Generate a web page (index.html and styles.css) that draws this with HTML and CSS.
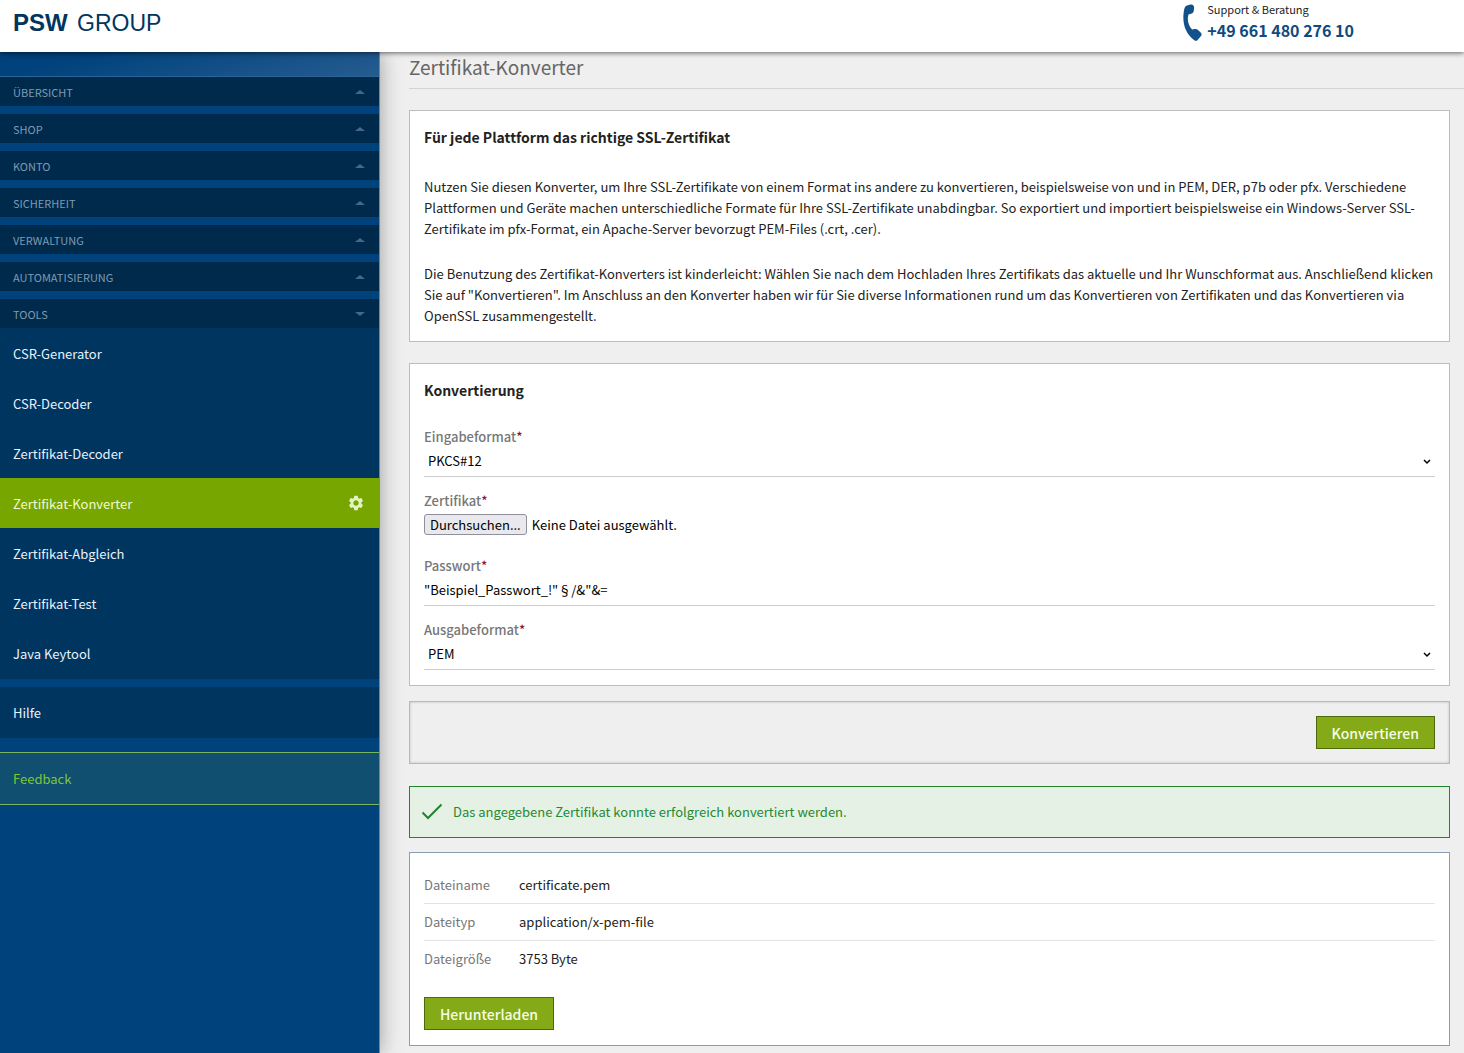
FILE: index.html
```html
<!DOCTYPE html>
<html lang="de">
<head>
    <meta charset="UTF-8">
    <meta name="viewport" content="width=device-width, initial-scale=1.0">
    <title>Zertifikat-Konverter</title>
    <link rel="stylesheet" href="styles.css">
</head>
<body>
    <header class="header">
        <a href="#" class="logo"><b>PSW</b> GROUP</a>
        <div class="support">
            <svg class="phone-icon" viewBox="0 0 19 37" aria-hidden="true">
                <path d="M4 1.500 7.500.6c2-.5 3.400.8 3.600 2.800l-.2 2.600c-.1 1.900-1 3.300-2.800 3.800l-2.600.6c-1.600 5.600-.3 10.900 3.600 15.200l2.400-.6c1.300-.3 2.500 0 3.500 1l2.900 2.800c1 1.200.9 2.600-.3 3.600l-3.200 3.800c-1 .8-2.100.7-3.100 0C2.300 29.500-.8 19.400.7 8.300 1.200 4.700 1.800 2.100 4 1.500z"/>
            </svg>
            <div>
                <div class="support-title">Support &amp; Beratung</div>
                <a href="tel:+4966148027610" class="support-number">+49 661 480 276 10</a>
            </div>
        </div>
    </header>

    <div class="layout">
        <nav class="sidebar">
            <div class="sidebar-top"></div>
            <div class="nav-groups">
                <button type="button" class="nav-group">ÜBERSICHT</button>
                <button type="button" class="nav-group">SHOP</button>
                <button type="button" class="nav-group">KONTO</button>
                <button type="button" class="nav-group">SICHERHEIT</button>
                <button type="button" class="nav-group">VERWALTUNG</button>
                <button type="button" class="nav-group">AUTOMATISIERUNG</button>
                <button type="button" class="nav-group open">TOOLS</button>
            </div>
            <div class="nav-list">
                <a href="#">CSR-Generator</a>
                <a href="#">CSR-Decoder</a>
                <a href="#">Zertifikat-Decoder</a>
                <a href="#" class="active">Zertifikat-Konverter
                    <svg class="gear-icon" viewBox="0 0 24 24" aria-hidden="true">
                        <path d="M19.140 12.940c.04-.3.06-.61.06-.94 0-.32-.02-.64-.07-.94l2.030-1.580c.18-.14.23-.41.12-.61l-1.920-3.320c-.12-.22-.37-.29-.59-.22l-2.390.96c-.5-.38-1.030-.7-1.620-.94l-.36-2.540c-.04-.24-.24-.41-.48-.41h-3.840c-.24 0-.43.17-.47.41l-.36 2.540c-.59.24-1.130.57-1.620.94l-2.390-.96c-.22-.08-.47 0-.59.22L2.740 8.870c-.12.21-.08.47.12.61l2.030 1.580c-.05.3-.09.63-.09.94s.02.64.07.94l-2.030 1.580c-.18.14-.23.41-.12.61l1.920 3.320c.12.22.37.29.59.22l2.390-.96c.5.38 1.030.7 1.620.94l.36 2.540c.05.24.24.41.48.41h3.840c.24 0 .44-.17.47-.41l.36-2.540c.59-.24 1.130-.56 1.620-.94l2.390.96c.22.08.47 0 .59-.22l1.920-3.320c.12-.22.07-.47-.12-.61l-2.010-1.580zM12 15.600c-1.980 0-3.600-1.620-3.600-3.600s1.620-3.600 3.600-3.600 3.600 1.620 3.600 3.600-1.620 3.600-3.600 3.600z"/>
                    </svg>
                </a>
                <a href="#">Zertifikat-Abgleich</a>
                <a href="#">Zertifikat-Test</a>
                <a href="#">Java Keytool</a>
            </div>
            <div class="nav-list">
                <a href="#">Hilfe</a>
            </div>
            <a href="#" class="feedback">Feedback</a>
        </nav>

        <main class="content">
            <h1>Zertifikat-Konverter</h1>

            <section class="card intro">
                <h2>Für jede Plattform das richtige SSL-Zertifikat</h2>
                <p>Nutzen Sie diesen Konverter, um Ihre SSL-Zertifikate von einem Format ins andere zu konvertieren, beispielsweise von und in PEM, DER, p7b oder pfx. Verschiedene Plattformen und Geräte machen unterschiedliche Formate für Ihre SSL-Zertifikate unabdingbar. So exportiert und importiert beispielsweise ein Windows-Server SSL-Zertifikate im pfx-Format, ein Apache-Server bevorzugt PEM-Files (.crt, .cer).</p>
                <p>Die Benutzung des Zertifikat-Konverters ist kinderleicht: Wählen Sie nach dem Hochladen Ihres Zertifikats das aktuelle und Ihr Wunschformat aus. Anschließend klicken Sie auf "Konvertieren". Im Anschluss an den Konverter haben wir für Sie diverse Informationen rund um das Konvertieren von Zertifikaten und das Konvertieren via OpenSSL zusammengestellt.</p>
            </section>

            <form id="converter-form">
                <section class="card">
                    <h2>Konvertierung</h2>
                    <div class="form-group">
                        <label for="input-format">Eingabeformat<span class="required">*</span></label>
                        <select id="input-format" name="input-format">
                            <option>PKCS#12</option>
                            <option>PEM</option>
                            <option>DER</option>
                        </select>
                    </div>
                    <div class="form-group">
                        <label for="certificate">Zertifikat<span class="required">*</span></label>
                        <div class="file-row">
                            <input type="file" id="certificate" name="certificate" class="file-input">
                            <button type="button" id="browse" class="browse">Durchsuchen...</button>
                            <span id="file-name">Keine Datei ausgewählt.</span>
                        </div>
                    </div>
                    <div class="form-group">
                        <label for="password">Passwort<span class="required">*</span></label>
                        <input type="text" id="password" name="password" class="text-input" value="&quot;Beispiel_Passwort_!&quot;§/&amp;&quot;&amp;=">
                    </div>
                    <div class="form-group">
                        <label for="output-format">Ausgabeformat<span class="required">*</span></label>
                        <select id="output-format" name="output-format">
                            <option>PEM</option>
                            <option>DER</option>
                            <option>PKCS#12</option>
                        </select>
                    </div>
                </section>

                <div class="actions">
                    <button type="submit" class="btn">Konvertieren</button>
                </div>
            </form>

            <div class="success-message">
                <svg class="check-icon" viewBox="0 0 22 17" aria-hidden="true">
                    <path d="M1.500 9.500 7 15 20.500 1.500"/>
                </svg>
                Das angegebene Zertifikat konnte erfolgreich konvertiert werden.
            </div>

            <section class="card result">
                <table>
                    <tr><th scope="row">Dateiname</th><td>certificate.pem</td></tr>
                    <tr><th scope="row">Dateityp</th><td>application/x-pem-file</td></tr>
                    <tr><th scope="row">Dateigröße</th><td>3753 Byte</td></tr>
                </table>
                <button type="button" class="btn">Herunterladen</button>
            </section>
        </main>
    </div>

    <script src="script.js"></script>
</body>
</html>
```
FILE: styles.css
```css
* {
    box-sizing: border-box;
}

body {
    margin: 0;
    font-family: "Noto Sans CJK SC", "Open Sans", sans-serif;
    font-size: 13px;
    line-height: 21px;
    color: #222;
    background-color: #efefef;
}

a {
    text-decoration: none;
}

button, input, select {
    font-family: inherit;
    font-size: inherit;
    color: inherit;
}

.header {
    position: relative;
    z-index: 2;
    display: flex;
    justify-content: space-between;
    height: 52px;
    padding: 0 110px 0 13px;
    background-color: #fff;
    box-shadow: 0 1px 5px rgba(0, 0, 0, 0.6);
}

.logo {
    font-family: "Liberation Sans", Arial, sans-serif;
    font-size: 23px;
    line-height: 46px;
    color: #003560;
}

.logo b {
    margin-right: 3px;
    font-size: 24px;
}

.support {
    display: flex;
    gap: 5px;
    line-height: 19px;
}

.phone-icon {
    width: 19px;
    height: 37px;
    margin-top: 4px;
    fill: #12518a;
}

.support-title {
    font-size: 11px;
}

.support-number {
    display: block;
    font-size: 16px;
    line-height: 22px;
    font-weight: bold;
    color: #0f4a80;
}

.layout {
    display: flex;
    min-height: calc(100vh - 52px);
}

/* Sidebar */
.sidebar {
    flex: 0 0 380px;
    background-color: #00427c;
    border-right: 1px solid #6d88a5;
    box-shadow: 0 0 20px rgba(0, 0, 0, 0.35);
}

.sidebar-top {
    height: 24px;
    background: linear-gradient(165deg, #00427c 20%, #265c90);
}

.nav-groups {
    display: flex;
    flex-direction: column;
    gap: 8px;
    border-top: 1px solid #2b6496;
}

.nav-group {
    display: flex;
    align-items: center;
    justify-content: space-between;
    height: 29px;
    padding: 0 14px 0 13px;
    border: none;
    background-color: #002a4b;
    color: #7e9ab2;
    font-size: 11px;
    cursor: pointer;
}

.nav-group::after {
    content: "";
    border: 5px solid transparent;
    border-top: none;
    border-bottom: 4px solid #46698a;
}

.nav-group.open::after {
    border-top: 4px solid #46698a;
    border-bottom: none;
}

.nav-list {
    margin-bottom: 8px;
    padding-bottom: 1px;
    background-color: #003560;
}

.nav-list a {
    display: flex;
    align-items: center;
    justify-content: space-between;
    height: 50px;
    padding: 0 14px 0 13px;
    color: #e6f2fc;
}

.nav-list a.active {
    background-color: #78a600;
    color: #effad6;
}

.gear-icon {
    width: 18px;
    height: 18px;
    fill: #e4f3c4;
}

.feedback {
    display: flex;
    align-items: center;
    height: 53px;
    margin-top: 14px;
    padding: 0 13px;
    border-top: 1px solid #78b55f;
    border-bottom: 1px solid #78b55f;
    background-color: #104f6f;
    color: #7dc638;
}

/* Content */
.content {
    flex: 1;
    min-width: 0;
    padding: 0 14px 8px 29px;
}

h1 {
    margin: 0 -14px 21px 0;
    padding-bottom: 7px;
    border-bottom: 1px solid #d4d4d4;
    color: #666;
    font-size: 19px;
    line-height: 29px;
    font-weight: normal;
}

h2 {
    margin: 0 0 26px;
    font-size: 14px;
    line-height: 22px;
    font-weight: bold;
}

.card {
    padding: 15px 14px;
    border: 1px solid #bdbdbd;
    background-color: #fff;
}

.intro {
    margin-bottom: 21px;
    padding-right: 8px;
}

.intro h2 {
    margin-bottom: 28px;
}

.intro p {
    margin: 0 0 24px;
}

.intro p:last-child {
    margin-bottom: 0;
}

.form-group {
    margin-bottom: 14px;
}

.form-group:last-child {
    margin-bottom: 0;
}

label {
    display: block;
    line-height: 20px;
    font-weight: 500;
    color: #777;
}

.required {
    color: #8a1538;
}

select, .text-input {
    display: block;
    width: 100%;
    height: 30px;
    padding: 0 4px 3px;
    border: none;
    border-bottom: 1px solid #ccc;
    border-radius: 0;
    background-color: transparent;
    color: #000;
}

select {
    appearance: none;
    background: url("data:image/svg+xml,%3Csvg xmlns='http://www.w3.org/2000/svg' viewBox='0 0 8 6'%3E%3Cpath d='M1 1l3 3 3-3' fill='none' stroke='%23000' stroke-width='1.500'/%3E%3C/svg%3E") no-repeat right 4px top 12px / 8px 6px;
}

.text-input {
    padding-left: 0;
}

.file-row {
    display: flex;
    align-items: center;
    gap: 5px;
    height: 31px;
    padding-bottom: 4px;
    color: #000;
}

/* the button beside it opens the file dialog */
.file-input {
    position: absolute;
    width: 1px;
    height: 1px;
    opacity: 0;
}

.browse {
    height: 21px;
    padding: 0 5px;
    border: 1px solid #8f8f9d;
    border-radius: 3px;
    background-color: #e9e9ed;
    line-height: 19px;
}

.actions {
    display: flex;
    justify-content: flex-end;
    margin: 15px 0 22px;
    padding: 14px;
    border: 1px solid #b9b9b9;
    box-shadow: inset 0 0 3px rgba(0, 0, 0, 0.2);
}

.btn {
    height: 33px;
    padding: 0 15px;
    border: 1px solid #4b6a0c;
    background-color: #84aa17;
    color: #f6fde4;
    font-size: 14px;
    font-weight: 500;
    cursor: pointer;
}

.success-message {
    display: flex;
    align-items: center;
    gap: 10px;
    height: 52px;
    margin-bottom: 14px;
    padding: 0 11px 1px;
    border: 1px solid #23832f;
    background-color: #e5f1e5;
    color: #268a30;
}

.check-icon {
    width: 22px;
    height: 17px;
    fill: none;
    stroke: #23832f;
    stroke-width: 2;
}

.result {
    padding-top: 13px;
    border-color: #8b9db3;
}

table {
    width: 100%;
    margin-bottom: 20px;
    border-collapse: collapse;
}

th, td {
    height: 37px;
    padding: 0;
    text-align: left;
}

tr + tr {
    border-top: 1px solid #e2e2e2;
}

th {
    width: 95px;
    color: #777;
    font-weight: normal;
}
```
FILE: script.js
```js
const fileInput = document.getElementById('certificate');
const fileName = document.getElementById('file-name');

document.getElementById('browse').addEventListener('click', () => fileInput.click());

fileInput.addEventListener('change', () => {
    fileName.textContent = fileInput.files.length ? fileInput.files[0].name : 'Keine Datei ausgewählt.';
});

document.getElementById('converter-form').addEventListener('submit', (e) => {
    e.preventDefault();
});
```
